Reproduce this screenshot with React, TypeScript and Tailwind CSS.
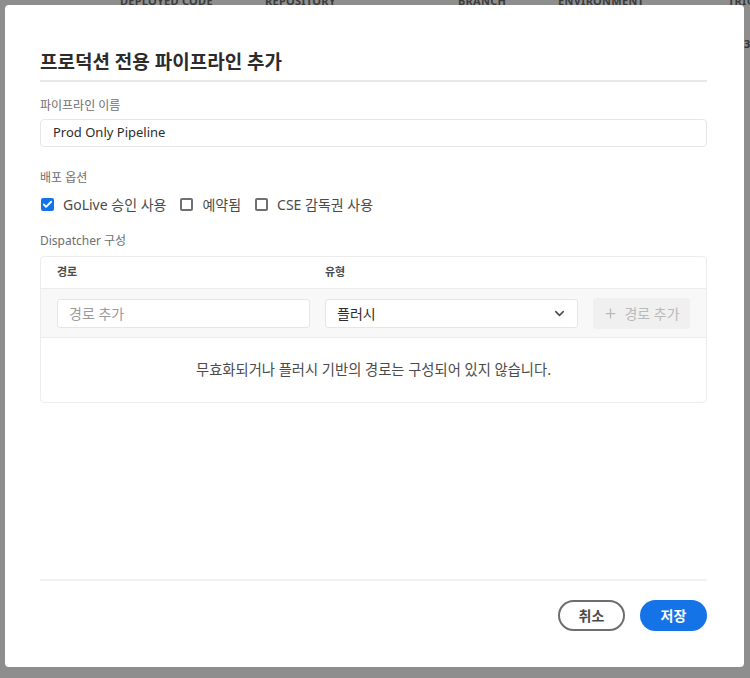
import { ChevronDown, Plus, Check } from "lucide-react";

const font = { fontFamily: '"Noto Sans", "Noto Sans CJK KR", sans-serif' };

function Checkbox({ checked, label }: { checked?: boolean; label: string }) {
  return (
    <label className="flex items-center gap-[9px] text-[14px] text-[#4b4b4b]">
      {checked ? (
        <span className="flex h-[13px] w-[13px] items-center justify-center rounded-[2px] bg-[#1473e6]">
          <Check className="h-[11px] w-[11px] text-white" strokeWidth={4} />
        </span>
      ) : (
        <span className="h-[13px] w-[13px] rounded-[2px] border-2 border-[#707070] bg-white" />
      )}
      <span>{label}</span>
    </label>
  );
}

export default function App() {
  return (
    <div className="relative h-[678px] w-[750px] overflow-hidden bg-[#8e8e8e]" style={font}>
      {/* page behind the overlay */}
      <div className="-mt-[7px] flex whitespace-nowrap text-[11px] font-bold uppercase tracking-wide text-[#3c3c3c]">
        <span className="ml-[120px] w-[145px] shrink-0">Deployed Code</span>
        <span className="w-[193px] shrink-0">Repository</span>
        <span className="w-[100px] shrink-0">Branch</span>
        <span className="w-[170px] shrink-0">Environment</span>
        <span className="shrink-0">Trigger</span>
      </div>
      <div className="absolute left-[744px] top-[36px] text-[11px] font-bold text-[#333]">3I</div>

      {/* dialog */}
      <div className="absolute left-[5px] top-[5px] flex h-[662px] w-[739px] flex-col rounded-[4px] bg-white pl-[35px] pr-[37px] pt-[45px] pb-[36px]">
        <h2 className="border-b-2 border-[#e8e8e8] pb-[6px] text-[19px] leading-[24px] font-bold text-[#2c2c2c]">
          프로덕션 전용 파이프라인 추가
        </h2>

        <div className="mt-[16px] text-[12px] leading-[16px] text-[#6e6e6e]">파이프라인 이름</div>
        <div className="mt-[5px] flex h-[28px] items-center rounded-[4px] border border-[#e6e6e6] px-[12px] text-[13px] text-[#2c2c2c]">
          Prod Only Pipeline
        </div>

        <div className="mt-[23px] text-[12px] leading-[16px] text-[#6e6e6e]">배포 옵션</div>
        <div className="mt-[8px] flex h-[20px] items-center gap-[14px] pl-[1px]">
          <Checkbox checked label="GoLive 승인 사용" />
          <Checkbox label="예약됨" />
          <Checkbox label="CSE 감독권 사용" />
        </div>

        <div className="mt-[19px] text-[12px] leading-[16px] text-[#6e6e6e]">Dispatcher 구성</div>
        <div className="mt-[7px] rounded-[4px] border border-[#ededed]">
          <div className="grid h-[31px] grid-cols-[1fr_1fr_97px] items-center gap-[15px] px-[16px] text-[11px] font-bold text-[#4b4b4b]">
            <span>경로</span>
            <span>유형</span>
            <span />
          </div>
          <div className="grid h-[50px] grid-cols-[1fr_1fr_97px] items-center gap-[15px] border-y border-[#ececec] bg-[#f8f8f8] px-[16px]">
            <div className="flex h-[29px] items-center rounded-[3px] border border-[#e6e6e6] bg-white px-[11px] text-[14px] text-[#9a9a9a]">
              경로 추가
            </div>
            <div className="flex h-[29px] items-center justify-between rounded-[3px] border border-[#e6e6e6] bg-white pl-[11px] pr-[10px] text-[14px] text-[#2c2c2c]">
              <span>플러시</span>
              <ChevronDown className="h-[15px] w-[15px] text-[#4b4b4b]" strokeWidth={2.5} />
            </div>
            <div className="flex h-[31px] items-center justify-center gap-[6px] rounded-[3px] bg-[#f0f0f0] text-[14px] text-[#b9b9b9]">
              <Plus className="h-[15px] w-[15px]" strokeWidth={2} />
              <span>경로 추가</span>
            </div>
          </div>
          <div className="flex h-[64px] items-center justify-center text-[14.3px] text-[#4b4b4b]">
            무효화되거나 플러시 기반의 경로는 구성되어 있지 않습니다.
          </div>
        </div>

        <div className="flex-1" />
        <div className="border-t-2 border-[#f2f2f2]" />
        <div className="mt-[19px] flex justify-end gap-[15px]">
          <button className="h-[31px] w-[67px] rounded-full border-2 border-[#6e6e6e] text-[14px] font-bold text-[#4b4b4b]">
            취소
          </button>
          <button className="h-[31px] w-[67px] rounded-full bg-[#1473e6] text-[14px] font-bold text-white">
            저장
          </button>
        </div>
      </div>
    </div>
  );
}
